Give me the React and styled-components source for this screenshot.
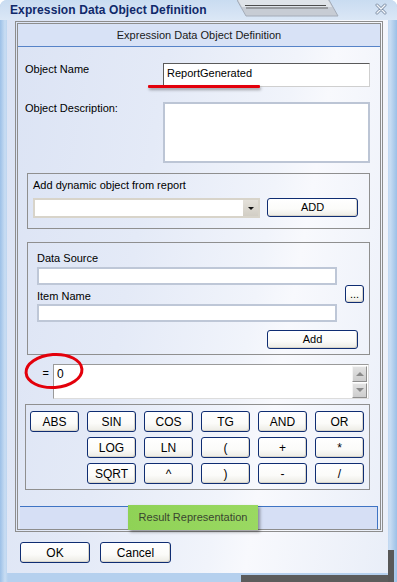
import React from 'react';
import styled, { createGlobalStyle } from 'styled-components';

const Global = createGlobalStyle`
  html, body { margin: 0; padding: 0; background: #ffffff; }
  body {
    width: 397px; height: 582px; overflow: hidden;
    font-family: "Liberation Sans", Arial, sans-serif; font-size: 11px; color: #000;
  }
  #root { width: 397px; height: 582px; }
  * { box-sizing: border-box; }
`;

const Window = styled.div`
  position: relative;
  width: 397px;
  height: 582px;
  display: flex;
  flex-direction: column;
  border-radius: 7px 7px 0 0;
  overflow: hidden;
  background:
    linear-gradient(#585858, #585858) right 3px bottom 0 / 6px 32px no-repeat,
    linear-gradient(#5c5c5c, #5c5c5c) right 3px bottom 0 / 153px 7px no-repeat,
    linear-gradient(to right, #9cc0e7 0, #c9ddf3 5px, #b5d0ee 8px, #b5d0ee 386px, #c9ddf3 390px, #9cc0e7 397px);
`;

const TitleBar = styled.div`
  position: relative;
  height: 20px;
  flex: none;
  display: flex;
  align-items: center;
  padding-left: 10px;
  background: linear-gradient(to bottom, #c9dcf1, #dbe7f6);
  font-family: "Liberation Sans", Arial, sans-serif;
  font-weight: bold;
  font-size: 12px;
  color: #10296a;
  letter-spacing: 0.1px;
`;

const Grip = styled.svg`
  position: absolute;
  left: 237px;
  top: 0;
`;

const Close = styled.svg`
  position: absolute;
  left: 375px;
  top: 3px;
`;

const Client = styled.div`
  flex: 1;
  margin: 0 9px 9px 7px;
  display: flex;
  flex-direction: column;
  background: linear-gradient(100deg, #dbe3f4 0%, #e4eaf7 35%, #f1f4fb 62%, #f8f9fd 70%, #e9eef8 100%);
`;

const Panel = styled.div`
  margin: 1px 5px 0 8px;
  border: 3px double #8d8d8d;
  display: flex;
  flex-direction: column;
`;

const Header = styled.div`
  height: 23px;
  border-bottom: 1px solid #5683c8;
  background: #d8e2f6;
  text-align: center;
  line-height: 22px;
  color: #1a1a1a;
`;

const Body = styled.div`
  padding: 16px 10px 0 7px;
  display: flex;
  flex-direction: column;
`;

const FieldGrid = styled.div`
  display: grid;
  grid-template-columns: 138px 207px;
  row-gap: 15px;
`;

const Label = styled.div`
  line-height: 13px;
  margin-top: ${p => p.$mt || 0}px;
  white-space: nowrap;
`;

const NameField = styled.div`
  width: 207px;
  height: 24px;
  background: #fff;
  border: 1px solid;
  border-color: #5a5a5a #cfcfcf #cfcfcf #5a5a5a;
  padding: 3px 0 0 3px;
  line-height: 13px;
`;

const DescField = styled.div`
  width: 207px;
  height: 61px;
  background: #fff;
  border: 2px solid #bcc5d5;
`;

const Group = styled.div`
  margin: ${p => p.$mt}px 0 0 2px;
  width: 343px;
  border: 1px solid #8f8f8f;
  padding: ${p => p.$pad};
`;

const Row = styled.div`
  display: flex;
  gap: 7px;
  margin-top: 6px;
`;

const Select = styled.div`
  width: 227px;
  height: 20px;
  background: #fff;
  border: 2px solid #d8d4ca;
  display: flex;
  justify-content: flex-end;
`;

const DropBtn = styled.div`
  width: 15px;
  height: 16px;
  background: linear-gradient(#e4e1da, #d2cec5);
  display: flex;
  align-items: center;
  justify-content: center;
  &::after {
    content: "";
    border-left: 3px solid transparent;
    border-right: 3px solid transparent;
    border-top: 3px solid #111;
  }
`;

const Btn = styled.button`
  width: ${p => p.$w || 49}px;
  height: ${p => p.$h || 21}px;
  flex: none;
  margin: 0;
  padding: 0;
  border: 1px solid #0f2d72;
  border-radius: 3px;
  background: linear-gradient(#ffffff 0%, #fbfbf9 60%, #ecebe4 100%);
  box-shadow: inset -1px -1px 0 #d8d5cb;
  font-family: "Liberation Sans", Arial, sans-serif;
  font-size: ${p => p.$fs || 11}px;
  color: #000;
  line-height: 1;
`;

const DSGrid = styled.div`
  display: grid;
  grid-template-columns: 300px 19px;
  column-gap: 8px;
  align-items: start;
`;

const Stack = styled.div`
  display: flex;
  flex-direction: column;
`;

const DSField = styled.div`
  width: 300px;
  height: 18px;
  background: #fff;
  border: 2px solid #bec7d7;
  margin-top: ${p => p.$mt}px;
`;

const DotsCell = styled.div`
  padding-top: 33px;
`;

const AddRow = styled.div`
  display: flex;
  justify-content: flex-end;
  margin-top: 8px;
  padding-right: 6px;
`;

const ExprRow = styled.div`
  display: flex;
  margin-top: 9px;
`;

const Eq = styled.div`
  width: 28px;
  text-align: right;
  padding: 3px 4px 0 0;
  line-height: 13px;
`;

const ExprField = styled.div`
  width: 316px;
  height: 35px;
  background: #fff;
  border: 1px solid;
  border-color: #9a9a9a #dcdcdc #dcdcdc #9a9a9a;
  display: flex;
`;

const ExprText = styled.div`
  flex: 1;
  padding: 3px 0 0 3px;
  font-size: 12px;
  line-height: 13px;
`;

const ScrollCol = styled.div`
  display: flex;
  flex-direction: column;
  gap: 1px;
  padding: 1px 1px 0 0;
`;

const ScrollBtn = styled.div`
  width: 15px;
  height: 16px;
  background: linear-gradient(#e2e2e2, #cdcdcd);
  border: 1px solid;
  border-color: #f4f4f4 #8e8e8e #8e8e8e #f4f4f4;
  display: flex;
  align-items: center;
  justify-content: center;
  &::after {
    content: "";
    border-left: 4px solid transparent;
    border-right: 4px solid transparent;
    ${p => (p.$up ? 'border-bottom: 4px solid #8a8a8a;' : 'border-top: 4px solid #8a8a8a;')}
  }
`;

const Calc = styled.div`
  margin-top: 5px;
  width: 345px;
  border: 1px solid #8f8f8f;
  padding: 6px 0 5px 4px;
  display: grid;
  grid-template-columns: repeat(6, 49px);
  grid-auto-rows: 21px;
  gap: 5px 8px;
`;

const ResultBar = styled.div`
  margin: 16px 2px 0 2px;
  height: 23px;
  background: #d6dff5;
  border-top: 1px solid #3f74c4;
  border-right: 1px solid #3f74c4;
  padding-left: 108px;
  display: flex;
`;

const Green = styled.div`
  width: 130px;
  height: 25px;
  margin-top: -2px;
  background: linear-gradient(to right, #8fd256, #9ad962);
  box-shadow: 2px 2px 3px rgba(0, 0, 0, 0.38);
  color: #3a4530;
  text-align: center;
  line-height: 25px;
`;

const Footer = styled.div`
  display: flex;
  gap: 10px;
  padding: 10px 0 0 13px;
`;

const Underline = styled.div`
  position: absolute;
  left: 148px;
  top: 85px;
  width: 112px;
  height: 3px;
  background: #e3000b;
  border-radius: 1px;
  box-shadow: 1px 2px 3px rgba(0, 0, 0, 0.35);
`;

const Ellipse = styled.svg`
  position: absolute;
  left: 23px;
  top: 351px;
`;

const calcKeys = [
  'ABS', 'SIN', 'COS', 'TG', 'AND', 'OR',
  null, 'LOG', 'LN', '(', '+', '*',
  null, 'SQRT', '^', ')', '-', '/',
];

export default function App() {
  return (
    <>
      <Global />
      <Window>
        <TitleBar>
          Expression Data Object Definition
          <Grip width="102" height="17" viewBox="0 0 102 17">
            <polygon points="0,0 92,0 101,16 9,16" fill="#c7ccd4" stroke="#a4acb8" strokeWidth="1" />
            <polygon points="1,0 91,0 95,7 5,7" fill="#dfe3e8" />
            <line x1="8" y1="5.5" x2="89" y2="5.5" stroke="#4d4d4d" strokeWidth="1" />
            <line x1="9" y1="8" x2="91" y2="8" stroke="#6a6a6a" strokeWidth="1" />
          </Grip>
          <Close width="12" height="12" viewBox="0 0 12 12">
            <path d="M2 2 L10 10 M10 2 L2 10" stroke="#7d8ea5" strokeWidth="3" strokeLinecap="round" />
            <path d="M2 2 L10 10 M10 2 L2 10" stroke="#f4f7fb" strokeWidth="1.4" strokeLinecap="round" />
          </Close>
        </TitleBar>
        <Client>
          <Panel>
            <Header>Expression Data Object Definition</Header>
            <Body>
              <FieldGrid>
                <Label>Object Name</Label>
                <NameField>ReportGenerated</NameField>
                <Label>Object Description:</Label>
                <DescField />
              </FieldGrid>

              <Group $mt={10} $pad="5px 0 10px 5px">
                <Label>Add dynamic object from report</Label>
                <Row>
                  <Select>
                    <DropBtn />
                  </Select>
                  <Btn $w={91} $h={19}>ADD</Btn>
                </Row>
              </Group>

              <Group $mt={13} $pad="9px 5px 5px 9px">
                <DSGrid>
                  <Stack>
                    <Label>Data Source</Label>
                    <DSField $mt={2} />
                    <Label $mt={5}>Item Name</Label>
                    <DSField $mt={1} />
                  </Stack>
                  <DotsCell>
                    <Btn $w={19} $h={18}>...</Btn>
                  </DotsCell>
                </DSGrid>
                <AddRow>
                  <Btn $w={91} $h={19}>Add</Btn>
                </AddRow>
              </Group>

              <ExprRow>
                <Eq>=</Eq>
                <ExprField>
                  <ExprText>0</ExprText>
                  <ScrollCol>
                    <ScrollBtn $up />
                    <ScrollBtn />
                  </ScrollCol>
                </ExprField>
              </ExprRow>

              <Calc>
                {calcKeys.map((k, i) =>
                  k ? <Btn key={i} $fs={12}>{k}</Btn> : <span key={i} />
                )}
              </Calc>
            </Body>
            <ResultBar>
              <Green>Result Representation</Green>
            </ResultBar>
          </Panel>
          <Footer>
            <Btn $w={70} $fs={12}>OK</Btn>
            <Btn $w={71} $fs={12}>Cancel</Btn>
          </Footer>
        </Client>
        <Underline />
        <Ellipse width="64" height="44" viewBox="0 0 64 44">
          <ellipse cx="31" cy="20" rx="28" ry="16.5" fill="none" stroke="#e3000b" strokeWidth="3" transform="rotate(-4 31 20)" />
        </Ellipse>
      </Window>
    </>
  );
}
